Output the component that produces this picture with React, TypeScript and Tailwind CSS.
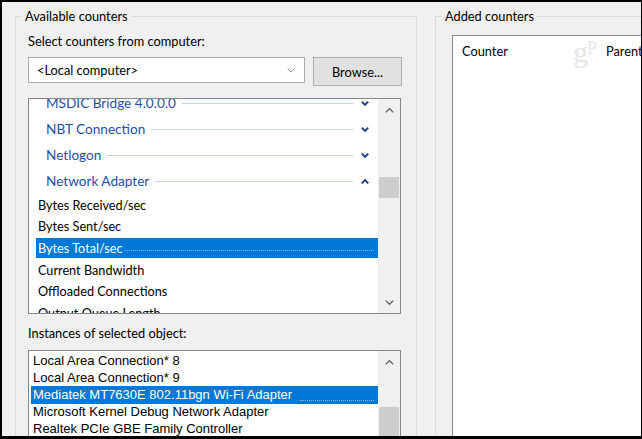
import React from "react";

function ScrollChevron({ up }: { up?: boolean }) {
  return (
    <svg width="9" height="5" viewBox="0 0 9 5" fill="none">
      <path
        d={up ? "M0.7 4.4 L4.5 0.7 L8.3 4.4" : "M0.7 0.6 L4.5 4.3 L8.3 0.6"}
        stroke="#606060"
        strokeWidth="1.3"
      />
    </svg>
  );
}

function CatChevron({ up }: { up?: boolean }) {
  return (
    <svg width="8" height="5" viewBox="0 0 8 5" fill="none">
      <path
        d={up ? "M0.8 4.3 L4 1.1 L7.2 4.3" : "M0.8 0.7 L4 3.9 L7.2 0.7"}
        stroke="#1a3c8c"
        strokeWidth="1.9"
      />
    </svg>
  );
}

function Scrollbar({ thumbTop, thumbH, down }: { thumbTop: number; thumbH?: number; down?: boolean }) {
  return (
    <div className="w-[22px] shrink-0 h-full bg-[#f0f0f0] flex flex-col">
      <div className="h-[22px] shrink-0 flex items-center justify-center">
        <ScrollChevron up />
      </div>
      <div className="flex-1 px-[1px]">
        <div
          className="bg-[#cdcdcd] w-full"
          style={{ marginTop: thumbTop, height: thumbH ?? 400 }}
        />
      </div>
      {down && (
        <div className="h-[22px] shrink-0 flex items-center justify-center">
          <ScrollChevron />
        </div>
      )}
    </div>
  );
}

const categories: { name: string; up?: boolean }[] = [
  { name: "MSDIC Bridge 4.0.0.0" },
  { name: "NBT Connection" },
  { name: "Netlogon" },
  { name: "Network Adapter", up: true },
];

const counters = [
  "Bytes Received/sec",
  "Bytes Sent/sec",
  "Bytes Total/sec",
  "Current Bandwidth",
  "Offloaded Connections",
  "Output Queue Length",
];

const instances = [
  "Local Area Connection* 8",
  "Local Area Connection* 9",
  "Mediatek MT7630E 802.11bgn Wi-Fi Adapter",
  "Microsoft Kernel Debug Network Adapter",
  "Realtek PCIe GBE Family Controller",
];

export default function App() {
  return (
    <div className="w-[642px] h-[439px] bg-black pt-[2px] pl-[2px] pr-[1px] pb-[3px] overflow-hidden">
      <div className="h-full w-full bg-[#f0f0f0] flex items-start overflow-hidden font-['Lato',sans-serif] text-[12.8px] leading-[18px] text-black">
        {/* Available counters */}
        <fieldset className="ml-[13px] mt-[5px] w-[402px] h-[480px] shrink-0 border border-[#dcdcdc]">
          <legend className="ml-[6px] px-[3px]">Available counters</legend>
          <div className="pl-[12px] pt-[7px]">
            <div>Select counters from computer:</div>
            <div className="mt-[7px] flex items-start">
              <div className="w-[277px] h-[26px] bg-white border border-[#acacac] flex items-center pl-[8px] pr-[9px]">
                <span className="flex-1">&lt;Local computer&gt;</span>
                <svg width="8" height="5" viewBox="0 0 8 5" fill="none">
                  <path d="M0.6 0.6 L4 4 L7.4 0.6" stroke="#9a9a9a" strokeWidth="1" />
                </svg>
              </div>
              <div className="ml-[8px] w-[89px] h-[29px] bg-[#e1e1e1] border border-[#adadad] flex items-center justify-center">
                Browse...
              </div>
            </div>

            {/* counters list */}
            <div className="mt-[12px] w-[373px] h-[216px] border border-[#828790] bg-white flex overflow-hidden">
              <div className="w-[349px] shrink-0 overflow-hidden">
                <div className="-mt-[9px]">
                  {categories.map((c) => (
                    <div key={c.name} className="h-[26px] flex items-center pl-[17px]">
                      <span className="text-[13.6px] text-[#1f4fa5] leading-[18px]">{c.name}</span>
                      <div className="flex-1 h-px bg-[#c4d3e8] ml-[6px]" />
                      <div className="w-[25px] pl-[8px] flex items-center">
                        <CatChevron up={c.up} />
                      </div>
                    </div>
                  ))}
                  {counters.map((c) => {
                    const sel = c === "Bytes Total/sec";
                    return (
                      <div key={c} className="h-[21.6px] py-[1px]">
                        <div
                          className={
                            sel
                              ? "h-full ml-[7px] pl-[2px] flex items-center bg-[#0078d7] text-white"
                              : "h-full ml-[7px] pl-[2px] flex items-center"
                          }
                        >
                          <span className="text-[12.7px]">{c}</span>
                          {sel && (
                            <div className="flex-1 h-0 border-t border-dotted border-[#7db8ee] mt-[5px] ml-[2px] mr-[4px]" />
                          )}
                        </div>
                      </div>
                    );
                  })}
                </div>
              </div>
              <Scrollbar thumbTop={56} thumbH={21} down />
            </div>

            <div className="mt-[10px]">Instances of selected object:</div>

            {/* instances list */}
            <div className="mt-[8px] w-[373px] h-[120px] border border-[#828790] bg-white flex overflow-hidden">
              <div className="w-[349px] shrink-0 overflow-hidden pt-[1px] font-['Liberation_Sans',sans-serif] text-[13px]">
                {instances.map((c) => {
                  const sel = c.startsWith("Mediatek");
                  return (
                    <div
                      key={c}
                      className={
                        sel
                          ? "h-[17.2px] ml-[2px] pl-[2px] flex items-center bg-[#0078d7] text-white"
                          : "h-[17.2px] ml-[2px] pl-[2px] flex items-center"
                      }
                    >
                      <span>{c}</span>
                      {sel && (
                        <div className="flex-1 h-0 border-t border-dotted border-[#7db8ee] mt-[11px] ml-[8px] mr-[4px]" />
                      )}
                    </div>
                  );
                })}
              </div>
              <Scrollbar thumbTop={34} />
            </div>
          </div>
        </fieldset>

        {/* Added counters */}
        <fieldset className="ml-[18px] mt-[5px] w-[300px] h-[480px] shrink-0 border border-[#dcdcdc]">
          <legend className="ml-[6px] px-[3px]">Added counters</legend>
          <div className="ml-[16px] mt-[10px] w-[270px] h-[460px] border border-[#828790] bg-white relative">
            <div className="flex pt-[6px] pl-[9px]">
              <span className="w-[144px] shrink-0">Counter</span>
              <span>Parent</span>
            </div>
            <div className="absolute left-[120px] top-[1px] font-['Liberation_Serif',serif] text-[#e6e6e6] leading-none flex items-start">
              <span className="text-[30px]">g</span>
              <span className="text-[18px] mt-[2px] -ml-[1px]">P</span>
            </div>
          </div>
        </fieldset>
      </div>
    </div>
  );
}
